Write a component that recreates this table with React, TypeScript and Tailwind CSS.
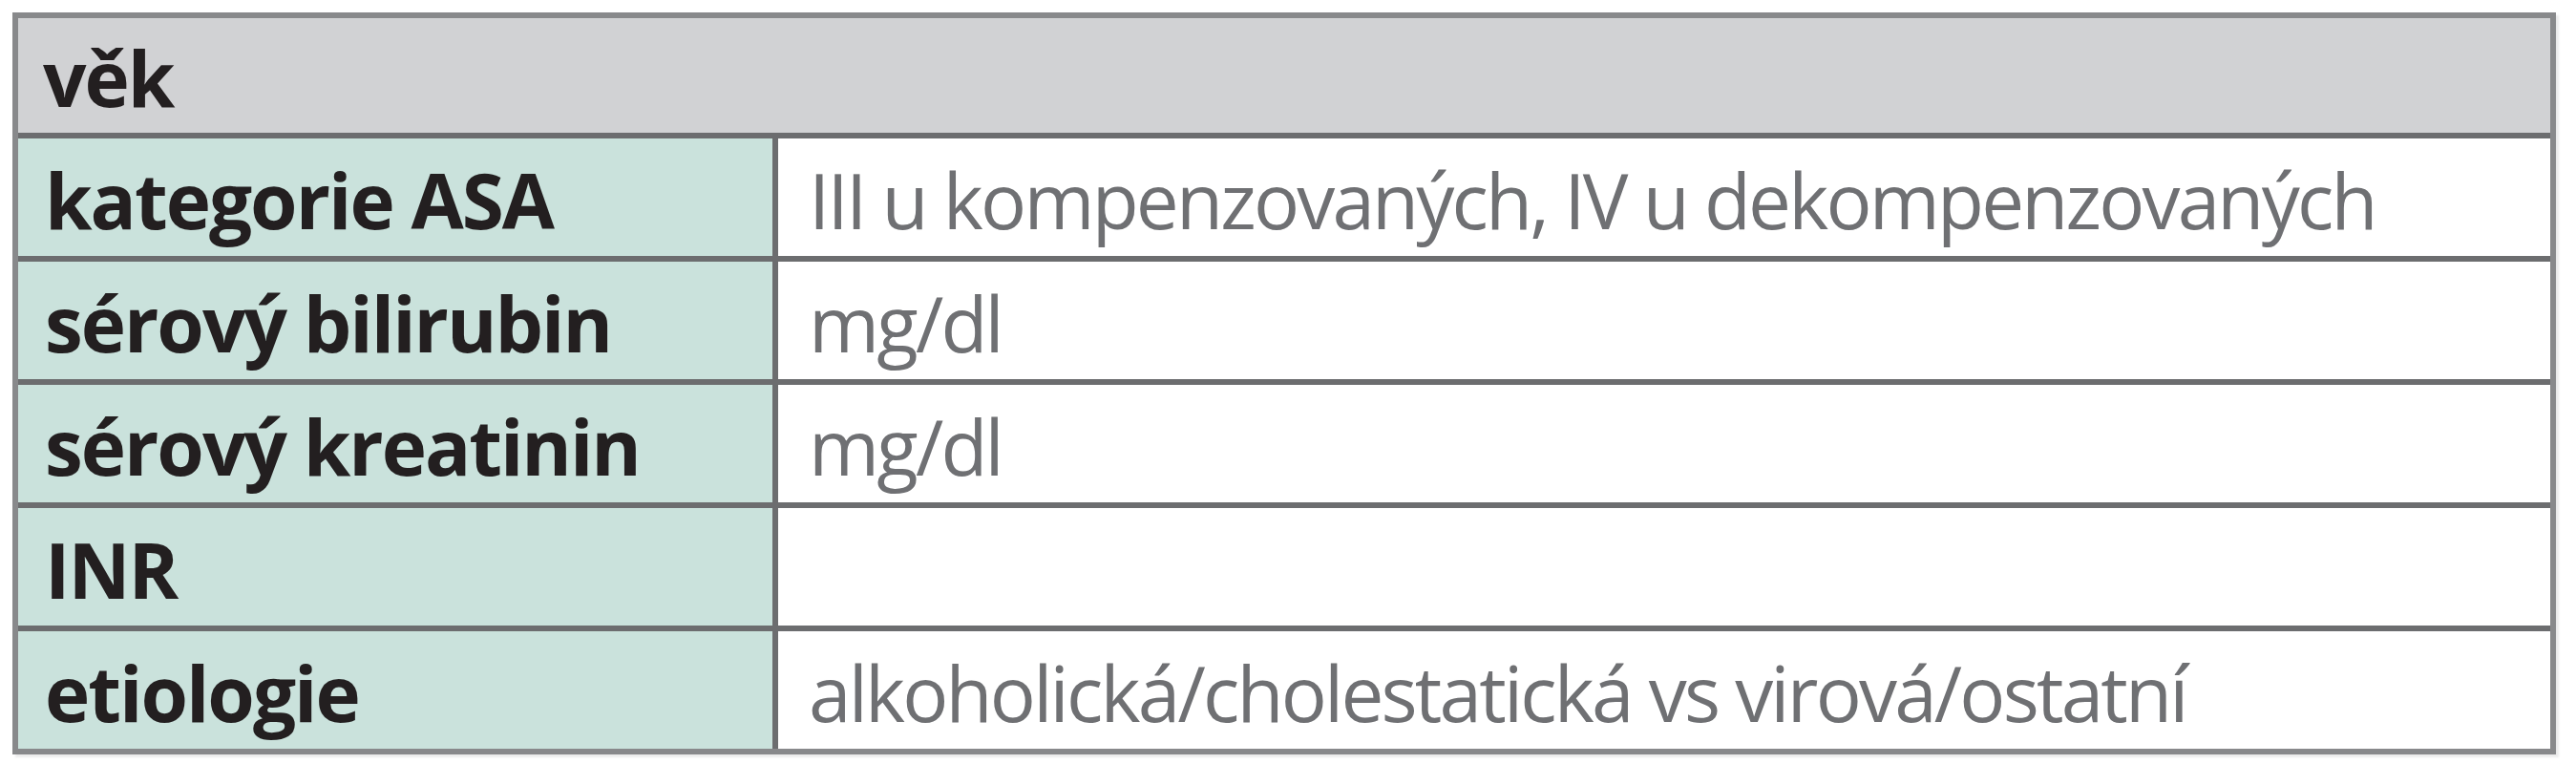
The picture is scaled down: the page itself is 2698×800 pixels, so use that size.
import React from 'react';

const rows: { label: string; value: string }[] = [
  { label: 'kategorie ASA', value: 'III u kompenzovaných, IV u dekompenzovaných' },
  { label: 'sérový bilirubin', value: 'mg/dl' },
  { label: 'sérový kreatinin', value: 'mg/dl' },
  { label: 'INR', value: '' },
  { label: 'etiologie', value: 'alkoholická/cholestatická vs virová/ostatní' },
];

const font = { fontFamily: '"Open Sans", "Noto Sans", sans-serif' };

export default function App() {
  return (
    <div className="w-[2698px] h-[800px] bg-white pt-[13px] pl-[13px]" style={font}>
      <div className="w-[2664px] border-[6px] border-[#88898b] shadow-[3px_3px_2px_rgba(0,0,0,0.08)]">
        {/* Header */}
        <div className="h-[120px] bg-[#d1d2d4] flex items-center pl-[26px] pt-[4px] text-[80px] leading-none font-bold tracking-[-2px] text-[#231f20]">
          věk
        </div>

        {rows.map((row, idx) => (
          <div key={idx} className="flex h-[129px] border-t-[6px] border-[#6c6d6f]">
            <div className="w-[790px] shrink-0 bg-[#cae2dc] flex items-center pl-[28px] pt-[4px] text-[80px] leading-none font-bold tracking-[-2px] text-[#231f20]">
              {row.label}
            </div>
            <div className="w-[6px] shrink-0 bg-[#6c6d6f]" />
            <div className="flex-1 bg-white flex items-center pl-[32px] pt-[4px] text-[80px] leading-none tracking-[-2.8px] text-[#6f7073]">
              {row.value}
            </div>
          </div>
        ))}
      </div>
    </div>
  );
}
